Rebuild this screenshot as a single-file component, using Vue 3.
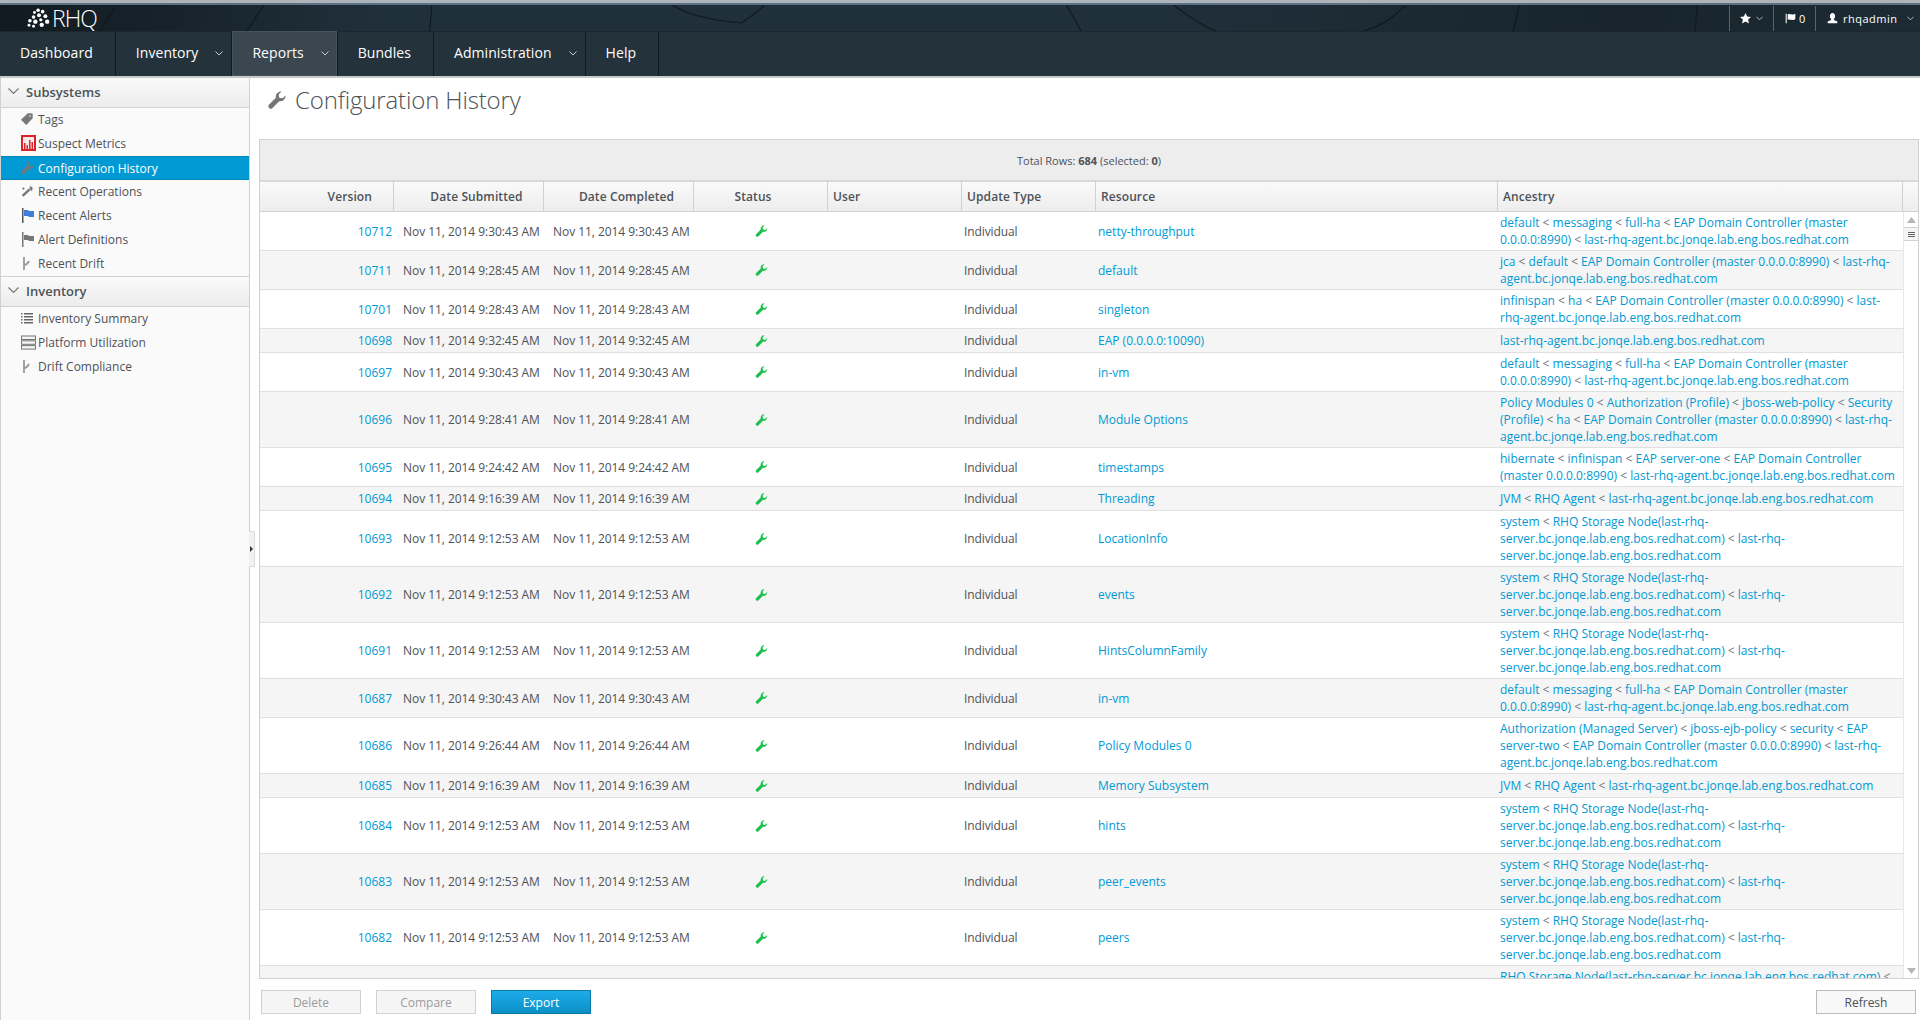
<script setup>
const columns = [134, 150, 150, 134, 134, 134, 402, 405]
const headers = [
  { label: 'Version', cls: 'h-version' },
  { label: 'Date Submitted', cls: 'h-date' },
  { label: 'Date Completed', cls: 'h-date' },
  { label: 'Status', cls: 'h-status' },
  { label: 'User', cls: 'h-left' },
  { label: 'Update Type', cls: 'h-left' },
  { label: 'Resource', cls: 'h-left' },
  { label: 'Ancestry', cls: 'h-left' }
]
const host = 'agent.bc.jonqe.lab.eng.bos.redhat.com'
const dc = 'EAP Domain Controller (master 0.0.0.0:8990)'
const messaging = ['default < messaging < full-ha < EAP Domain Controller (master', `0.0.0.0:8990) < last-rhq-${host}`]
const storage = ['system < RHQ Storage Node(last-rhq-', 'server.bc.jonqe.lab.eng.bos.redhat.com) < last-rhq-', 'server.bc.jonqe.lab.eng.bos.redhat.com']
const jvm = [`JVM < RHQ Agent < last-rhq-${host}`]
const rows = [
  { v: 10712, s: '9:30:43', r: 'netty-throughput', a: messaging },
  { v: 10711, s: '9:28:45', r: 'default', a: [`jca < default < ${dc} < last-rhq-`, host] },
  { v: 10701, s: '9:28:43', r: 'singleton', a: [`infinispan < ha < ${dc} < last-`, `rhq-${host}`] },
  { v: 10698, s: '9:32:45', r: 'EAP (0.0.0.0:10090)', a: [`last-rhq-${host}`] },
  { v: 10697, s: '9:30:43', r: 'in-vm', a: messaging },
  { v: 10696, s: '9:28:41', r: 'Module Options', a: ['Policy Modules 0 < Authorization (Profile) < jboss-web-policy < Security', `(Profile) < ha < ${dc} < last-rhq-`, host] },
  { v: 10695, s: '9:24:42', r: 'timestamps', a: ['hibernate < infinispan < EAP server-one < EAP Domain Controller', `(master 0.0.0.0:8990) < last-rhq-${host}`] },
  { v: 10694, s: '9:16:39', r: 'Threading', a: jvm },
  { v: 10693, s: '9:12:53', r: 'LocationInfo', a: storage },
  { v: 10692, s: '9:12:53', r: 'events', a: storage },
  { v: 10691, s: '9:12:53', r: 'HintsColumnFamily', a: storage },
  { v: 10687, s: '9:30:43', r: 'in-vm', a: messaging },
  { v: 10686, s: '9:26:44', r: 'Policy Modules 0', a: ['Authorization (Managed Server) < jboss-ejb-policy < security < EAP', `server-two < ${dc} < last-rhq-`, host] },
  { v: 10685, s: '9:16:39', r: 'Memory Subsystem', a: jvm },
  { v: 10684, s: '9:12:53', r: 'hints', a: storage },
  { v: 10683, s: '9:12:53', r: 'peer_events', a: storage },
  { v: 10682, s: '9:12:53', r: 'peers', a: storage }
]
const sections = [
  {
    title: 'Subsystems',
    items: [
      { label: 'Tags', icon: 'tag' },
      { label: 'Suspect Metrics', icon: 'chart' },
      { label: 'Configuration History', icon: 'wrench', active: true },
      { label: 'Recent Operations', icon: 'wand' },
      { label: 'Recent Alerts', icon: 'flagBlue' },
      { label: 'Alert Definitions', icon: 'flag' },
      { label: 'Recent Drift', icon: 'drift' }
    ]
  },
  {
    title: 'Inventory',
    items: [
      { label: 'Inventory Summary', icon: 'list' },
      { label: 'Platform Utilization', icon: 'server' },
      { label: 'Drift Compliance', icon: 'drift' }
    ]
  }
]
const nav = [
  { label: 'Dashboard' },
  { label: 'Inventory', caret: true },
  { label: 'Reports', caret: true, active: true },
  { label: 'Bundles' },
  { label: 'Administration', caret: true },
  { label: 'Help' }
]
const wrench = 'M12 .5A4.500 4.500 0 0 0 7 6L1 12a2.100 2.100 0 0 0 3 3L10 9A4.500 4.500 0 0 0 15.500 4L13 6.500 10 6 9.500 3Z'
const parts = line => line.split(/(<)/)
</script>

<template>
  <div class="page">
    <header class="banner">
      <svg class="texture" viewBox="0 0 1921 26" preserveAspectRatio="none" aria-hidden="true">
        <g fill="none" stroke="#10191f" stroke-width="1.2">
          <path d="M116 0 100 26M264 0 247 26M432 0 430 26" />
          <path d="M673 0C690 12 720 16 742 18 750 12 760 6 765 0" />
          <path d="M1067 0 1082 26M1174 0C1190 12 1205 22 1217 26M1407 0C1395 12 1380 22 1364 26M1520 0 1514 26M1698 0 1696 26" />
        </g>
      </svg>
      <div class="logo">
        <svg width="24" height="20" viewBox="0 0 26 22" fill="#fff" aria-hidden="true">
          <circle cx="12" cy="2.500" r="2" /><circle cx="8" cy="5" r="1.600" /><circle cx="17" cy="4" r="2" />
          <circle cx="13" cy="8" r="2.200" /><circle cx="7" cy="10" r="2" /><circle cx="20" cy="9" r="2.200" />
          <circle cx="3" cy="14" r="2" /><circle cx="9" cy="15" r="2.400" /><circle cx="15" cy="13" r="1.800" />
          <circle cx="22" cy="15" r="2.400" /><circle cx="2" cy="19" r="1.600" /><circle cx="7" cy="20" r="1.600" /><circle cx="16" cy="18.500" r="2.400" />
        </svg>
        <span>RHQ</span>
      </div>
      <div class="tools">
        <div class="tool tool-star">
          <svg width="11" height="11" viewBox="0 0 16 16" fill="#fff"><path d="M8 0l2.400 5.200 5.600.6-4.200 3.800 1.200 5.600L8 12.400 3 15.200l1.200-5.600L0 5.800l5.600-.6z" /></svg>
          <svg class="mini-caret" width="7" height="5" viewBox="0 0 8 5"><path d="M.5.5 4 4 7.500.5" /></svg>
        </div>
        <div class="tool tool-flag">
          <svg width="11" height="11" viewBox="0 0 16 16" fill="#fff"><path d="M1 1h1.500v14H1zM4 2c3-1.500 5 1 8 0l3-1v8l-3 1c-3 1-5-1.500-8 0z" /></svg>
          <span>0</span>
        </div>
        <div class="tool tool-user">
          <svg width="11" height="11" viewBox="0 0 16 16" fill="#fff"><path d="M8 0c2.500 0 3.800 2 3.800 4.500 0 2-1 3.500-1.800 4.300v1.200l5 2.500V15H1v-2.500L6 10V8.800C5.200 8 4.200 6.500 4.200 4.500 4.200 2 5.500 0 8 0z" /></svg>
          <span>rhqadmin</span>
          <svg class="mini-caret caret-user" width="7" height="5" viewBox="0 0 8 5"><path d="M.5.5 4 4 7.500.5" /></svg>
        </div>
      </div>
    </header>

    <nav class="nav">
      <a v-for="item in nav" :key="item.label" class="nav-item" :class="{ active: item.active, 'has-caret': item.caret }">
        {{ item.label }}
        <svg v-if="item.caret" class="nav-caret" width="8" height="5" viewBox="0 0 8 5"><path d="M.5.5 4 4 7.500.5" /></svg>
      </a>
    </nav>

    <div class="workspace">
      <aside class="sidebar">
        <section v-for="section in sections" :key="section.title">
          <h3 class="section-title">
            <svg width="11" height="7" viewBox="0 0 11 7"><path d="M.5.5 5.500 5.500 10.500.5" /></svg>
            {{ section.title }}
          </h3>
          <ul class="section-list">
            <li v-for="item in section.items" :key="item.label" class="side-item" :class="{ active: item.active }">
              <span class="side-icon">
                <svg v-if="item.icon === 'tag'" width="12" height="12" viewBox="0 0 16 16" fill="#777"><path d="M9 1h6v6l-8 8.500L.5 9z" stroke="#777" stroke-linejoin="round" /><circle cx="12" cy="4" r="1.100" fill="#fff" /></svg>
                <svg v-else-if="item.icon === 'chart'" width="15" height="16" viewBox="0 0 15 16"><rect x="1" y="1" width="13" height="14" fill="#fbeaea" stroke="#d8232a" stroke-width="2" /><path d="M3 8h1.500v6H3zM5.500 10H7v4H5.500zM8 5h1.500v9H8zM10.500 7H12v7h-1.500z" fill="#d8232a" /></svg>
                <svg v-else-if="item.icon === 'wrench'" width="13" height="14" viewBox="0 0 16 16" fill="#777"><path :d="wrench" /></svg>
                <svg v-else-if="item.icon === 'wand'" width="13" height="14" viewBox="0 0 16 16" fill="#777"><path d="M1 13 9.500 5l2 2L3 15zM11 1l1 2 2-.5-.5 2 2 1-2 .8.300 2-1.800-1.200-1.500-1.500M3 3l.8 1.500L5.500 5l-1.700.5L3 7l-.8-1.500L.5 5l1.700-.5z" /></svg>
                <svg v-else-if="item.icon === 'flagBlue'" width="13" height="15" viewBox="0 0 13 15"><path d="M1 0h1.500v15H1z" fill="#555" /><path d="M3 2h4l1 1h5v6H8L7 8H3z" fill="#3f7fd6" /></svg>
                <svg v-else-if="item.icon === 'flag'" width="13" height="15" viewBox="0 0 13 15"><path d="M1 0h1.500v15H1z" fill="#777" /><path d="M3 3h4l1 1h5v5H8L7 8H3z" fill="#777" /></svg>
                <svg v-else-if="item.icon === 'drift'" width="10" height="15" viewBox="0 0 10 15" fill="none" stroke="#999" stroke-width="1.800"><path d="M3 1v13M3 9c3 0 4-2 5-4" /></svg>
                <svg v-else-if="item.icon === 'list'" width="12" height="13" viewBox="0 0 12 13" fill="#666"><path d="M0 1h1.500v1.500H0zM3 1h9v1.500H3zM0 4h1.500v1.500H0zM3 4h9v1.500H3zM0 7h1.500v1.500H0zM3 7h9v1.500H3zM0 10h1.500v1.500H0zM3 10h9v1.500H3z" /></svg>
                <svg v-else width="15" height="15" viewBox="0 0 15 15" fill="#f4f4f4" stroke="#777"><rect x=".5" y="1" width="14" height="3.500" /><rect x=".5" y="5.800" width="14" height="3.500" /><rect x=".5" y="10.600" width="14" height="3.500" /></svg>
              </span>
              <span>{{ item.label }}</span>
            </li>
          </ul>
        </section>
        <div class="splitter"><i></i></div>
      </aside>

      <main class="content">
        <h1 class="title">
          <svg width="18" height="18" viewBox="0 0 16 16" fill="#777"><path :d="wrench" /></svg>
          Configuration History
        </h1>

        <div class="grid">
          <div class="summary"><span>Total Rows: <b>684</b> (selected: <b>0</b>)</span></div>
          <div class="grid-head">
            <table>
              <colgroup><col v-for="(c, i) in columns" :key="i" :style="{ width: c + 'px' }" /></colgroup>
              <thead>
                <tr><th v-for="h in headers" :key="h.label" :class="h.cls">{{ h.label }}</th></tr>
              </thead>
            </table>
          </div>
          <div class="grid-main">
            <div class="grid-body">
              <table>
                <colgroup><col v-for="(c, i) in columns" :key="i" :style="{ width: c + 'px' }" /></colgroup>
                <tbody>
                  <tr v-for="row in rows" :key="row.v">
                    <td class="c-version"><a>{{ row.v }}</a></td>
                    <td class="c-date">Nov 11, 2014 {{ row.s }} AM</td>
                    <td class="c-date">Nov 11, 2014 {{ row.s }} AM</td>
                    <td class="c-status"><svg width="13" height="12" viewBox="0 0 16 16" fill="#1fbf4f"><path :d="wrench" /></svg></td>
                    <td></td>
                    <td class="c-type">Individual</td>
                    <td class="c-resource"><a>{{ row.r }}</a></td>
                    <td class="c-ancestry">
                      <span v-for="(line, li) in row.a" :key="li" class="line"><template v-for="(p, pi) in parts(line)" :key="pi"><span v-if="p === '<'" class="sep">&lt;</span><a v-else>{{ p }}</a></template></span>
                    </td>
                  </tr>
                  <tr>
                    <td></td><td></td><td></td><td></td><td></td><td></td><td></td>
                    <td class="c-ancestry">
                      <span class="line"><a>RHQ Storage Node(last-rhq-server.bc.jonqe.lab.eng.bos.redhat.com) </a><span class="sep">&lt;</span></span>
                      <span class="line">&nbsp;</span><span class="line">&nbsp;</span>
                    </td>
                  </tr>
                </tbody>
              </table>
            </div>
            <div class="scrollbar">
              <svg class="arrow" width="9" height="6" viewBox="0 0 9 6"><path d="M4.500 0 9 6H0z" /></svg>
              <div class="thumb"><i></i><i></i><i></i></div>
              <svg class="arrow bottom" width="9" height="6" viewBox="0 0 9 6"><path d="M0 0h9L4.500 6z" /></svg>
            </div>
          </div>
        </div>

        <div class="actions">
          <button class="btn" disabled>Delete</button>
          <button class="btn" disabled>Compare</button>
          <button class="btn primary">Export</button>
          <button class="btn refresh">Refresh</button>
        </div>
      </main>
    </div>
  </div>
</template>

<style>
html, body { margin: 0; background: #fff; }
</style>

<style scoped>
.page {
  height: 1020px;
  width: 1920px;
  display: flex;
  flex-direction: column;
  overflow: hidden;
  font-family: "Open Sans", "Liberation Sans", sans-serif;
  font-size: 12px;
  color: #4d5258;
  background: #fff;
}
a { color: #0099d3; }

.banner {
  position: relative;
  height: 26px;
  flex: none;
  margin-top: 5px;
  display: flex;
  align-items: center;
  justify-content: space-between;
  background: linear-gradient(90deg, #111a20 0, #16222a 8%, #20303a 20%, #20303a 60%, #17242c 85%, #1d2c34 100%);
  box-shadow: 0 -2px 0 #5d7186, 0 -5px 0 #aeb4b7;
}
.texture { position: absolute; inset: 0; width: 100%; height: 100%; }
.logo {
  position: relative;
  display: flex;
  align-items: center;
  gap: 1px;
  margin-left: 27px;
  color: #fff;
  font-size: 23px;
  font-weight: 300;
  letter-spacing: -1px;
}
.tools { position: relative; display: flex; height: 25px; color: #fff; font-size: 11px; }
.tool { display: flex; align-items: center; border-left: 1px solid #59646b; padding-top: 1px; box-sizing: border-box; }
.tool-star { width: 44px; padding-left: 10px; gap: 5px; }
.tool-flag { width: 42px; padding-left: 11px; gap: 3px; font-size: 11px; }
.tool-user { width: 105px; padding-left: 11px; gap: 5px; letter-spacing: .5px; }
.mini-caret path, .nav-caret path { fill: none; stroke: #c8cdd0; stroke-width: 1; }
.caret-user { margin-left: 4px; }

.nav {
  display: flex;
  height: 45px;
  flex: none;
  background: #24323b;
  border-bottom: 2px solid #c6c9cb;
  box-shadow: inset 0 1px 0 #1b262d;
}
.nav-item {
  position: relative;
  display: flex;
  align-items: center;
  padding: 0 22px 2px 20px;
  border-right: 1px solid #101a20;
  color: #fff;
  font-size: 14px;
  letter-spacing: .06px;
}
.nav-item.has-caret { padding-right: 33px; }
.nav-item.active { background: #3a4750; box-shadow: inset 0 0 0 1px #46535c; }
.nav-caret { position: absolute; right: 8px; top: 20px; }

.workspace { flex: 1; display: flex; min-height: 0; }
.sidebar {
  position: relative;
  flex: none;
  width: 248px;
  background: #fafafa;
  border-left: 1px solid #d1d1d1;
  border-right: 1px solid #d1d1d1;
}
.section-title {
  display: flex;
  align-items: center;
  gap: 7px;
  margin: 0;
  padding: 0 0 2px 7px;
  box-sizing: content-box;
  height: 27px;
  font-size: 13px;
  font-weight: 600;
  background: linear-gradient(#fafafa, #ececec);
  border-bottom: 1px solid #d1d1d1;
}
.section-title svg path { fill: none; stroke: #777; stroke-width: 1.200; }
section + section .section-title { border-top: 1px solid #d1d1d1; }
.section-list { list-style: none; margin: 0; padding: 0; }
.side-item {
  display: flex;
  align-items: center;
  height: 24px;
  padding-bottom: 2px;
  box-sizing: border-box;
}
.side-item.active { background: #0099d3; color: #fff; border-top: 1px solid #0085b8; border-bottom: 1px solid #0085b8; padding-bottom: 0; }
.side-icon { width: 37px; flex: none; padding-left: 20px; box-sizing: border-box; display: flex; justify-content: flex-start; align-items: center; height: 16px; }
.splitter {
  position: absolute;
  left: 248px;
  top: 453px;
  width: 5px;
  height: 34px;
  background: #f1f1f1;
  border: 1px solid #dcdcdc;
  border-left: 0;
  display: flex;
  align-items: center;
}
.splitter i { border-left: 3px solid #333; border-top: 3px solid transparent; border-bottom: 3px solid transparent; margin-left: 1px; }

.content { flex: 1; min-width: 0; display: flex; flex-direction: column; padding: 0 1px 0 9px; }
.title {
  display: flex;
  align-items: center;
  gap: 9px;
  height: 61px;
  margin: 0;
  padding: 0 0 18px 9px;
  box-sizing: border-box;
  font-size: 24px;
  font-weight: 300;
  letter-spacing: -.15px;
  color: #4d5258;
}
.grid {
  height: 840px;
  flex: none;
  display: flex;
  flex-direction: column;
  border: 1px solid #d1d1d1;
  box-sizing: border-box;
}
.summary {
  height: 42px;
  flex: none;
  display: flex;
  align-items: center;
  justify-content: center;
  font-size: 11px;
  background: #ededed;
  border-bottom: 2px solid #d9d9d9;
  box-sizing: border-box;
}
table { border-collapse: separate; border-spacing: 0; table-layout: fixed; width: 1643px; }
.grid-head {
  height: 30px;
  flex: none;
  box-sizing: border-box;
  background: linear-gradient(#fafafa, #ededed);
  border-bottom: 1px solid #d1d1d1;
}
th {
  height: 29px;
  padding: 0;
  font-size: 12px;
  font-weight: 600;
  letter-spacing: .1px;
  border-right: 1px solid #d1d1d1;
  box-sizing: border-box;
}
.h-version { text-align: right; padding-right: 21px; }
.h-date { text-align: center; padding-left: 16px; }
.h-status { text-align: center; padding-right: 15px; }
.h-left { text-align: left; padding-left: 5px; }
.grid-main { flex: 1; display: flex; min-height: 0; }
.grid-body { width: 1643px; overflow: hidden; flex: none; }
td {
  padding: 2px 0;
  height: 24px;
  box-sizing: border-box;
  line-height: 17px;
  border-bottom: 1px solid #e0e0e0;
  vertical-align: middle;
  white-space: nowrap;
}
tr:nth-child(even) td { background: #f5f5f5; }
.c-version { text-align: right; padding-right: 2px; }
.c-date { padding-left: 9px; letter-spacing: -.05px; }
.c-status svg { display: block; margin: 0 auto; }
.c-type { padding-left: 2px; letter-spacing: -.1px; }
.c-resource { padding-left: 2px; }
.c-ancestry { padding-left: 2px; }
.line { display: block; white-space: pre; height: 17px; }
.sep { color: #6e7378; }
.scrollbar { position: relative; flex: 1; border-left: 1px solid #e6e6e6; }
.arrow { position: absolute; left: 3px; top: 5px; fill: #b5b5b5; }
.arrow.bottom { top: auto; bottom: 4px; }
.thumb {
  position: absolute;
  left: 0;
  right: 0;
  top: 15px;
  height: 12px;
  background: #f5f5f5;
  border-top: 1px solid #d1d1d1;
  border-bottom: 1px solid #d1d1d1;
  display: flex;
  flex-direction: column;
  justify-content: center;
  align-items: center;
  gap: 1px;
}
.thumb i { width: 7px; height: 1px; background: #666; }

.actions { display: flex; align-items: flex-start; gap: 15px; padding: 11px 0 0 2px; }
.btn {
  width: 100px;
  height: 24px;
  padding: 0;
  font: 12px "Open Sans", "Liberation Sans", sans-serif;
  color: #4d5258;
  background: #fff;
  border: 1px solid #bbb;
  box-sizing: border-box;
}
.btn:disabled { color: #9c9c9c; background: #f5f5f5; border-color: #d1d1d1; }
.btn.primary { color: #fff; background: linear-gradient(#1cacea, #0d8fc6); border: 1px solid #0a7aa8; }
.btn.refresh { margin-left: auto; margin-right: 3px; background: #f8f8f8; }
</style>
